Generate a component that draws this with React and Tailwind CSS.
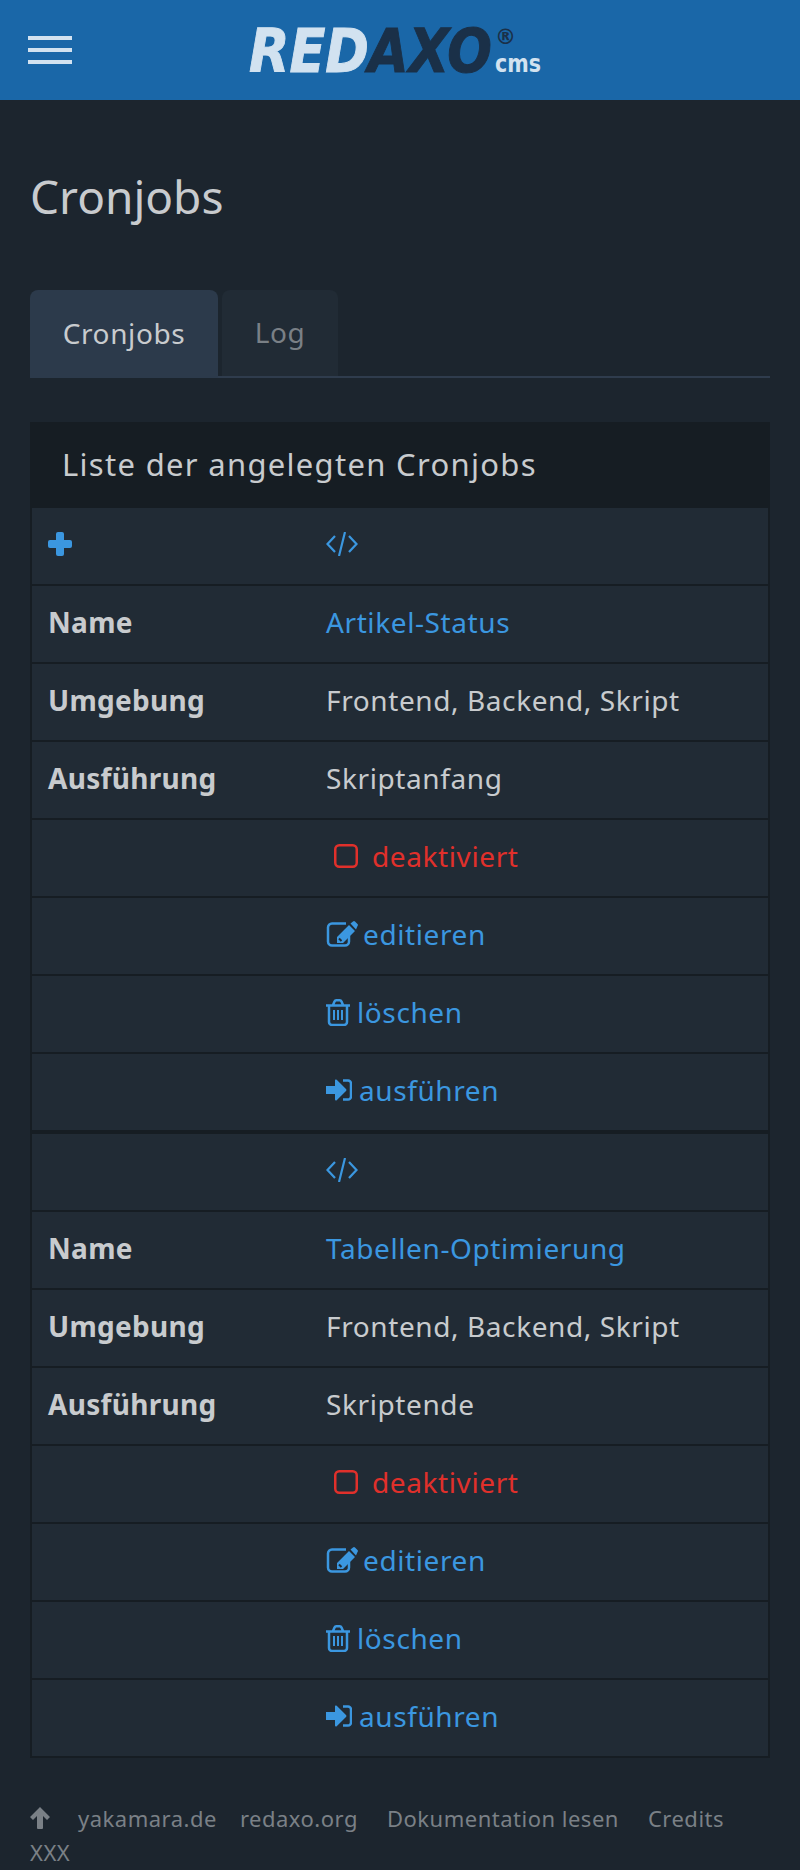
const font = '[font-family:"Noto_Sans","Open_Sans",sans-serif]';

function PlusIcon() {
  return (
    <svg width="24" height="24" viewBox="0 0 24 24" fill="#3b97e0">
      <rect x="8" width="8" height="24" rx="2" />
      <rect y="8" width="24" height="8" rx="2" />
    </svg>
  );
}

function CodeIcon() {
  return (
    <svg width="32" height="24" viewBox="0 0 32 24" fill="none" stroke="currentColor" strokeWidth="2.2">
      <path d="M9 4 1.500 12 9 20" />
      <path d="M23 4l7.500 8L23 20" />
      <path d="M19 0 13 24" />
    </svg>
  );
}

function SquareIcon() {
  return (
    <svg width="24" height="24" viewBox="0 0 24 24" fill="none" stroke="currentColor" strokeWidth="2.5">
      <rect x="1.250" y="1.250" width="21.500" height="21.500" rx="4" />
    </svg>
  );
}

function EditIcon() {
  return (
    <svg width="32" height="26" viewBox="0 0 32 26" fill="none">
      <path d="M20 2.500H6a4 4 0 0 0-4 4v14a4 4 0 0 0 4 4h13a4 4 0 0 0 4-4v-6" stroke="currentColor" strokeWidth="2.500" />
      <path d="M11 22v-6L23 4l6 6-12 12zM24.500 2.500 27 .5a1.500 1.500 0 0 1 2 0l2.500 2.500a1.500 1.500 0 0 1 0 2L30 8.500z" fill="currentColor" />
      <path d="M13 17.500l2.500 2.500" stroke="#212b35" strokeWidth="2" />
    </svg>
  );
}

function TrashIcon() {
  return (
    <svg width="24" height="27" viewBox="0 0 24 27" fill="none" stroke="currentColor">
      <path d="M0 6.500h24M7 6l1.500-3.500a2 2 0 0 1 2-1.200h3a2 2 0 0 1 2 1.200L17 6M3 7v16a3 3 0 0 0 3 3h12a3 3 0 0 0 3-3V7" strokeWidth="2.500" />
      <path d="M8 11v10M12 11v10M16 11v10" strokeWidth="2" />
    </svg>
  );
}

function SignInIcon() {
  return (
    <svg width="26" height="22" viewBox="0 0 26 22" fill="none">
      <path d="M0 7h9V1.500a1 1 0 0 1 1.700-.7L20 10a1.400 1.400 0 0 1 0 2l-9.300 9.200A1 1 0 0 1 9 20.500V15H0z" fill="currentColor" />
      <path d="M17 1.500h5a3 3 0 0 1 3 3v13a3 3 0 0 1-3 3h-5" stroke="currentColor" strokeWidth="2.500" />
    </svg>
  );
}

function ArrowUpIcon() {
  return (
    <svg width="20" height="22" viewBox="0 0 20 22" fill="currentColor">
      <path d="M10 0 20 10l-3 3-4-4v12a1 1 0 0 1-1 1H8a1 1 0 0 1-1-1V9l-4 4-3-3z" />
    </svg>
  );
}

function Logo() {
  return (
    <svg width="294" height="84" viewBox="0 0 294 84" className="overflow-visible font-['DejaVu_Sans']">
      <text x="0" y="64" fontSize="60" fontWeight="700" fontStyle="italic" fill="#d2e2f0" stroke="#d2e2f0" strokeWidth="1" textLength="120" lengthAdjust="spacingAndGlyphs">RED</text>
      <text x="119" y="64" fontSize="60" fontWeight="700" fontStyle="italic" fill="#1a3048" stroke="#1a3048" strokeWidth="1" textLength="124" lengthAdjust="spacingAndGlyphs">AXO</text>
      <text x="246" y="36" fontSize="21" fill="#1a3048" fontWeight="700">®</text>
      <text x="246" y="64" fontSize="24" fontWeight="700" fill="#d2e2f0" textLength="46" lengthAdjust="spacingAndGlyphs">cms</text>
    </svg>
  );
}

function Row({ label, children, last }) {
  return (
    <div className={`flex items-center bg-[#212b35] pb-1 text-[28px] tracking-[0.6px] ${last ? 'h-[76px]' : 'h-[78px] border-b-2 border-[#161d23]'}`}>
      <div className="w-[294px] pl-4 font-bold tracking-[0.3px] text-[#c8cbce]">{label}</div>
      <div className="flex-1">{children}</div>
    </div>
  );
}

function Action({ icon, children, gap }) {
  return (
    <a className={`flex items-center ${gap} text-[#3b97e0]`}>
      {icon}
      {children}
    </a>
  );
}

function Job({ plus, name, time }) {
  return (
    <div>
      <Row label={plus ? <PlusIcon /> : null}>
        <span className="flex text-[#3b97e0]"><CodeIcon /></span>
      </Row>
      <Row label="Name"><a className="text-[#3b97e0]">{name}</a></Row>
      <Row label="Umgebung"><span className="text-[#c8cbce]">Frontend, Backend, Skript</span></Row>
      <Row label="Ausführung"><span className="text-[#c8cbce]">{time}</span></Row>
      <Row>
        <span className="ml-2 flex items-center gap-[14px] text-[#e0302b]"><SquareIcon />deaktiviert</span>
      </Row>
      <Row><Action gap="gap-[5px]" icon={<EditIcon />}>editieren</Action></Row>
      <Row><Action gap="gap-[7px]" icon={<TrashIcon />}>löschen</Action></Row>
      <Row last><Action gap="gap-[7px]" icon={<SignInIcon />}>ausführen</Action></Row>
    </div>
  );
}

export default function App() {
  return (
    <div className={`min-h-[1870px] bg-[#1c252e] ${font}`}>
      <header className="flex h-[100px] items-center bg-[#1a67a8] pl-7">
        <div className="flex w-11 flex-col gap-2">
          <span className="h-1 bg-[#d2e2f0]" />
          <span className="h-1 bg-[#d2e2f0]" />
          <span className="h-1 bg-[#d2e2f0]" />
        </div>
        <div className="ml-[177px] flex"><Logo /></div>
      </header>

      <main className="px-[30px]">
        <h1 className="pt-[66px] pb-0.5 text-[46px] leading-[60px] text-[#c8cbce]">Cronjobs</h1>

        <div className="mt-[62px] flex h-[88px] gap-1 border-b-2 border-[#2f3c4d]">
          <div className="-mb-0.5 flex w-[188px] items-center justify-center rounded-t-lg bg-[#2c3a4b] pb-[3px] text-[28px] tracking-[0.6px] text-[#c8cbce]">Cronjobs</div>
          <div className="flex w-[116px] items-center justify-center rounded-t-lg bg-[#212b35] pb-[3px] text-[28px] tracking-[0.6px] text-[#7a8086]">Log</div>
        </div>

        <section className="mt-[44px] border-x-2 border-b-2 border-[#161d23]">
          <h2 className="-mx-0.5 flex h-[86px] items-center bg-[#161d23] pb-0.5 pl-8 text-[31px] tracking-[1.3px] text-[#c8cbce]">Liste der angelegten Cronjobs</h2>
          <Job plus name="Artikel-Status" time="Skriptanfang" />
          <div className="h-1 bg-[#161d23]" />
          <Job name="Tabellen-Optimierung" time="Skriptende" />
        </section>
      </main>

      <footer className="mt-[43px] px-[30px] text-[22px] leading-[34px] tracking-[0.5px] text-[#7a8086]">
        <div className="flex items-center">
          <ArrowUpIcon />
          <a className="ml-7">yakamara.de</a>
          <a className="ml-[23px]">redaxo.org</a>
          <a className="ml-[29px]">Dokumentation lesen</a>
          <a className="ml-[29px]">Credits</a>
        </div>
        <div>XXX</div>
      </footer>
    </div>
  );
}
